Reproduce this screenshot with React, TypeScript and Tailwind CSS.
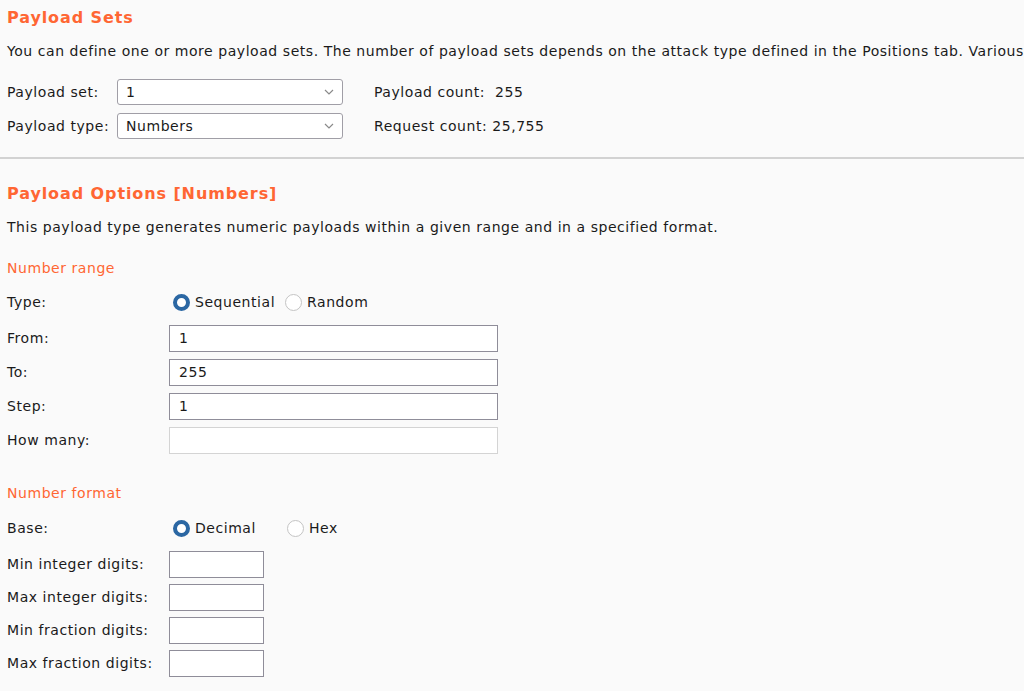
import React from 'react';

const font = { fontFamily: '"DejaVu Sans", sans-serif' };

const Chevron = () => (
  <svg width="10" height="6" viewBox="0 0 10 6" className="absolute right-[8px] top-1/2 -translate-y-1/2">
    <path d="M1 1 L5 5 L9 1" fill="none" stroke="#8a8a8a" strokeWidth="1.2" />
  </svg>
);

const Select = ({ value }: { value: string }) => (
  <div className="relative w-[226px] h-[26px] bg-white border border-[#a09ea6] rounded-[3px] flex items-center pl-[8px] text-[#1a1a1a]">
    {value}
    <Chevron />
  </div>
);

const Radio = ({ checked, label }: { checked?: boolean; label: string }) => (
  <div className="flex items-center gap-[5px]">
    {checked ? (
      <span className="w-[17px] h-[17px] rounded-full border-[4px] border-[#2b67a3] bg-white" />
    ) : (
      <span className="w-[17px] h-[17px] rounded-full border border-[#c4c4c4] bg-white" />
    )}
    <span>{label}</span>
  </div>
);

const Field = ({ value, w, disabled }: { value?: string; w: string; disabled?: boolean }) => (
  <div
    className={`${w} h-[27px] bg-white border flex items-center pl-[9px] ${
      disabled ? 'border-[#d4d4d4]' : 'border-[#8f8d99]'
    }`}
  >
    {value}
  </div>
);

const Row = ({ label, children, className = '' }: { label: string; children: React.ReactNode; className?: string }) => (
  <div className={`flex items-center h-[27px] ${className}`}>
    <div className="w-[162px] shrink-0 whitespace-nowrap">{label}</div>
    {children}
  </div>
);

export default function App() {
  return (
    <div
      style={font}
      className="w-[1024px] h-[691px] overflow-hidden bg-[#fafafa] text-[14px] tracking-[0.55px] text-[#1a1a1a]"
    >
      <div className="px-[7px] pt-[7px]">
        <h2 className="text-[16px] font-bold tracking-[0.9px] text-[#ff6633] h-[22px] leading-[22px]">Payload Sets</h2>
        <p className="mt-[13px] whitespace-nowrap h-[18px] leading-[18px]">
          You can define one or more payload sets. The number of payload sets depends on the attack type defined in the Positions tab. Various payload types are available for each payload set, and each payload type can be customized in different ways.
        </p>
        <div className="mt-[19px] flex flex-col gap-[8px]">
          <div className="flex items-center">
            <div className="w-[110px] whitespace-nowrap">Payload set:</div>
            <Select value="1" />
            <div className="ml-[31px]">Payload count:&nbsp; 255</div>
          </div>
          <div className="flex items-center">
            <div className="w-[110px] whitespace-nowrap">Payload type:</div>
            <Select value="Numbers" />
            <div className="ml-[31px]">Request count: 25,755</div>
          </div>
        </div>
      </div>
      <div className="mt-[18px] h-[2px] bg-[#d2d2d2]" />
      <div className="px-[7px] pt-[24px]">
        <h2 className="text-[16px] font-bold tracking-[0.9px] text-[#ff6633] h-[22px] leading-[22px]">
          Payload Options [Numbers]
        </h2>
        <p className="mt-[13px] h-[18px] leading-[18px] whitespace-nowrap">
          This payload type generates numeric payloads within a given range and in a specified format.
        </p>
        <h3 className="mt-[23px] text-[14px] text-[#ff6633] h-[18px] leading-[18px]">Number range</h3>
        <div className="mt-[12px] flex flex-col gap-[7px]">
          <Row label="Type:">
            <div className="flex items-center gap-[10px] ml-[4px]">
              <Radio checked label="Sequential" />
              <Radio label="Random" />
            </div>
          </Row>
          <Row label="From:" className="mt-[2px]">
            <Field w="w-[329px]" value="1" />
          </Row>
          <Row label="To:">
            <Field w="w-[329px]" value="255" />
          </Row>
          <Row label="Step:">
            <Field w="w-[329px]" value="1" />
          </Row>
          <Row label="How many:">
            <Field w="w-[329px]" disabled />
          </Row>
        </div>
        <h3 className="mt-[30px] text-[14px] text-[#ff6633] h-[18px] leading-[18px]">Number format</h3>
        <div className="mt-[13px] flex flex-col gap-[6px]">
          <Row label="Base:">
            <div className="flex items-center ml-[4px]">
              <div className="w-[114px]">
                <Radio checked label="Decimal" />
              </div>
              <Radio label="Hex" />
            </div>
          </Row>
          <Row label="Min integer digits:" className="mt-[3px]">
            <Field w="w-[95px]" />
          </Row>
          <Row label="Max integer digits:">
            <Field w="w-[95px]" />
          </Row>
          <Row label="Min fraction digits:">
            <Field w="w-[95px]" />
          </Row>
          <Row label="Max fraction digits:">
            <Field w="w-[95px]" />
          </Row>
        </div>
      </div>
    </div>
  );
}
